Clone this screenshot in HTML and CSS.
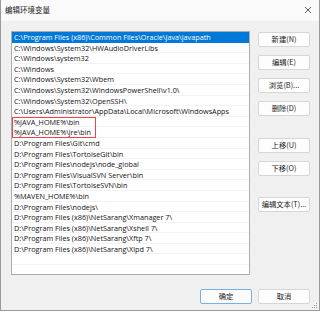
FILE: index.html
```html
<!DOCTYPE html>
<html lang="zh-CN">

<head>
    <meta charset="UTF-8">
    <title>编辑环境变量</title>
    <link rel="stylesheet" href="styles.css">
</head>

<body>
    <div class="window">
        <div class="titlebar">
            <span class="title">编辑环境变量</span>
            <svg class="close" width="8" height="8" viewBox="0 0 8 8">
                <path d="M1 1 L7 7 M7 1 L1 7" stroke="#333" stroke-width="0.8" fill="none" />
            </svg>
        </div>

        <div class="content">
            <div class="main">
                <div class="list">
                    <div class="row selected">C:\Program Files (x86)\Common Files\Oracle\Java\javapath</div>
                    <div class="row">C:\Windows\System32\HWAudioDriverLibs</div>
                    <div class="row">C:\Windows\system32</div>
                    <div class="row">C:\Windows</div>
                    <div class="row">C:\Windows\System32\Wbem</div>
                    <div class="row">C:\Windows\System32\WindowsPowerShell\v1.0\</div>
                    <div class="row">C:\Windows\System32\OpenSSH\</div>
                    <div class="row">C:\Users\Administrator\AppData\Local\Microsoft\WindowsApps</div>
                    <div class="row">%JAVA_HOME%\bin</div>
                    <div class="row">%JAVA_HOME%\jre\bin</div>
                    <div class="row">D:\Program Files\Git\cmd</div>
                    <div class="row">D:\Program Files\TortoiseGit\bin</div>
                    <div class="row">D:\Program Files\nodejs\node_global</div>
                    <div class="row">D:\Program Files\VisualSVN Server\bin</div>
                    <div class="row">D:\Program Files\TortoiseSVN\bin</div>
                    <div class="row">%MAVEN_HOME%\bin</div>
                    <div class="row">D:\Program Files\nodejs\</div>
                    <div class="row">D:\Program Files (x86)\NetSarang\Xmanager 7\</div>
                    <div class="row">D:\Program Files (x86)\NetSarang\Xshell 7\</div>
                    <div class="row">D:\Program Files (x86)\NetSarang\Xftp 7\</div>
                    <div class="row">D:\Program Files (x86)\NetSarang\Xlpd 7\</div>
                    <div class="row"></div>
                    <div class="row"></div>
                    <div class="mark"></div>
                </div>

                <div class="side">
                    <button class="btn">新建(N)</button>
                    <button class="btn">编辑(E)</button>
                    <button class="btn">浏览(B)...</button>
                    <button class="btn">删除(D)</button>
                    <button class="btn group">上移(U)</button>
                    <button class="btn">下移(O)</button>
                    <button class="btn group">编辑文本(T)...</button>
                </div>
            </div>

            <div class="footer">
                <button class="btn default">确定</button>
                <button class="btn">取消</button>
            </div>
        </div>

        <svg class="grip" width="6" height="6" viewBox="0 0 6 6">
            <rect x="4" y="0" width="1" height="1" fill="#999" />
            <rect x="2" y="2" width="1" height="1" fill="#999" />
            <rect x="4" y="2" width="1" height="1" fill="#999" />
            <rect x="0" y="4" width="1" height="1" fill="#999" />
            <rect x="2" y="4" width="1" height="1" fill="#999" />
            <rect x="4" y="4" width="1" height="1" fill="#999" />
        </svg>
    </div>
</body>

</html>
```

FILE: styles.css
```css
body {
    margin: 0;
    padding: 0;
    background-color: #ffffff;
    font-family: 'Open Sans', 'Noto Sans CJK SC', sans-serif;
    color: #1a1a1a;
}

.window {
    position: relative;
    width: 320px;
    height: 311px;
    box-sizing: border-box;
    border: 1px solid #9a9a9a;
    border-top: none;
    display: flex;
    flex-direction: column;
    background-color: #f0f0f0;
    overflow: hidden;
}

.titlebar {
    height: 19px;
    background-color: #fafafa;
    display: flex;
    align-items: center;
    justify-content: space-between;
    padding: 0 7px 2px 4px;
}

.title {
    font-family: 'Noto Sans CJK SC', sans-serif;
    font-size: 7.5px;
    color: #222;
}

.content {
    flex: 1;
    padding: 10px 9px 0 10px;
}

.main {
    display: flex;
    gap: 8px;
}

.list {
    position: relative;
    width: 239px;
    height: 244px;
    box-sizing: border-box;
    border: 1px solid #adadad;
    background-color: #ffffff;
    overflow: hidden;
}

.row {
    height: 10.6px;
    box-sizing: border-box;
    line-height: 10px;
    padding-left: 2px;
    font-size: 7.25px;
    color: #111;
    white-space: nowrap;
    border-bottom: 1px solid #f3f3f3;
}

.row.selected {
    background-color: #0078d7;
    color: #ffffff;
    border-bottom-color: #0078d7;
}

.mark {
    position: absolute;
    left: 0;
    top: 85px;
    width: 84px;
    height: 21px;
    border: 1px solid #e8464a;
    box-sizing: border-box;
}

.side {
    display: flex;
    flex-direction: column;
    gap: 8px;
    padding-top: 1px;
}

.btn {
    width: 52px;
    height: 15px;
    padding: 0;
    background-color: #fdfdfd;
    border: 1px solid #d6d6d6;
    border-radius: 2px;
    font-family: 'Noto Sans CJK SC', sans-serif;
    font-size: 7.3px;
    color: #1a1a1a;
    line-height: 13px;
}

.side .group {
    margin-top: 14px;
}

.side .group:last-child {
    margin-top: 13px;
}

.footer {
    display: flex;
    justify-content: flex-end;
    gap: 6px;
    margin-top: 14px;
}

.btn.default {
    border-color: #79b0e3;
}

.grip {
    position: absolute;
    right: 1px;
    bottom: 1px;
}
```
